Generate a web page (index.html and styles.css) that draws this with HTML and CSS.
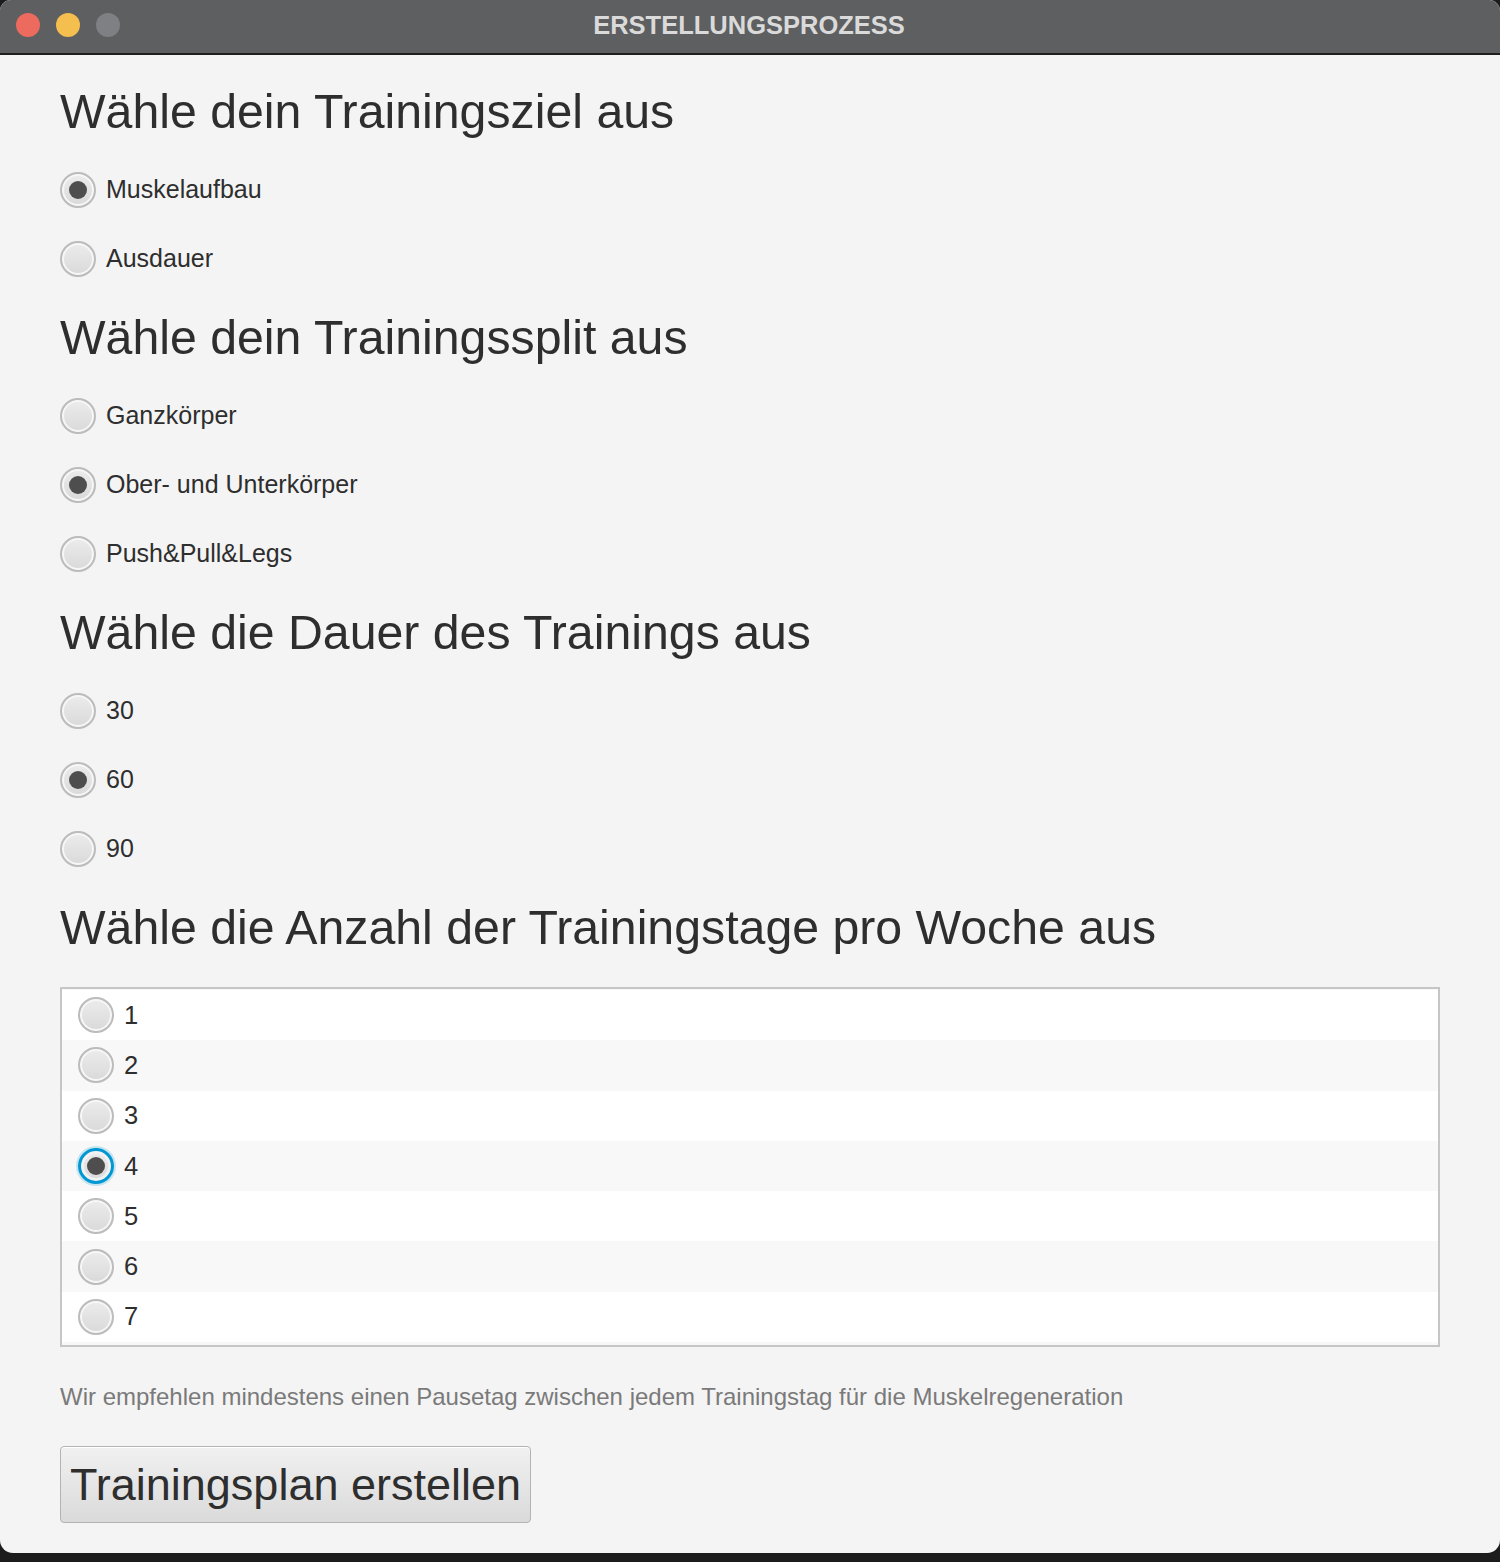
FILE: index.html
```html
<!DOCTYPE html>
<html lang="de">
<head>
<meta charset="utf-8">
<title>Erstellungsprozess</title>
<link rel="stylesheet" href="styles.css">
</head>
<body>
<div class="window">
  <div class="titlebar">
    <div class="lights">
      <span class="light red"></span>
      <span class="light yellow"></span>
      <span class="light gray"></span>
    </div>
    <div class="title">ERSTELLUNGSPROZESS</div>
  </div>
  <div class="content">
    <h2 class="heading">Wähle dein Trainingsziel aus</h2>
    <div class="group">
      <label class="option"><span class="radio checked"></span><span class="label">Muskelaufbau</span></label>
      <label class="option"><span class="radio"></span><span class="label">Ausdauer</span></label>
    </div>
    <h2 class="heading">Wähle dein Trainingssplit aus</h2>
    <div class="group">
      <label class="option"><span class="radio"></span><span class="label">Ganzkörper</span></label>
      <label class="option"><span class="radio checked"></span><span class="label">Ober- und Unterkörper</span></label>
      <label class="option"><span class="radio"></span><span class="label">Push&amp;Pull&amp;Legs</span></label>
    </div>
    <h2 class="heading">Wähle die Dauer des Trainings aus</h2>
    <div class="group">
      <label class="option"><span class="radio"></span><span class="label">30</span></label>
      <label class="option"><span class="radio checked"></span><span class="label">60</span></label>
      <label class="option"><span class="radio"></span><span class="label">90</span></label>
    </div>
    <h2 class="heading">Wähle die Anzahl der Trainingstage pro Woche aus</h2>
    <div class="list">
      <div class="list-row"><span class="radio"></span><span class="label">1</span></div>
      <div class="list-row odd"><span class="radio"></span><span class="label">2</span></div>
      <div class="list-row"><span class="radio"></span><span class="label">3</span></div>
      <div class="list-row odd"><span class="radio checked focused"></span><span class="label">4</span></div>
      <div class="list-row"><span class="radio"></span><span class="label">5</span></div>
      <div class="list-row odd"><span class="radio"></span><span class="label">6</span></div>
      <div class="list-row"><span class="radio"></span><span class="label">7</span></div>
    </div>
    <p class="hint">Wir empfehlen mindestens einen Pausetag zwischen jedem Trainingstag für die Muskelregeneration</p>
    <button class="create">Trainingsplan erstellen</button>
  </div>
</div>
</body>
</html>
```

FILE: styles.css
```css
html, body {
  margin: 0;
  padding: 0;
  background: #1c1c1c;
}

body {
  width: 1500px;
  height: 1562px;
  font-family: "Liberation Sans", Arial, sans-serif;
}

.window {
  width: 1500px;
  height: 1553px;
  background: #f4f4f4;
  border-radius: 11px 11px 13px 13px;
  overflow: hidden;
  display: flex;
  flex-direction: column;
}

.titlebar {
  height: 53px;
  flex: none;
  background: #5e5f61;
  border-bottom: 2px solid #1e1e1e;
  position: relative;
  display: flex;
  align-items: center;
  justify-content: center;
}

.lights {
  position: absolute;
  left: 16px;
  top: 13px;
  display: flex;
  gap: 16px;
}

.light {
  width: 24px;
  height: 24px;
  border-radius: 50%;
  display: block;
}

.light.red { background: #ed6a5e; }
.light.yellow { background: #f5bf4f; }
.light.gray { background: #7f8083; }

.title {
  color: #dadada;
  font-weight: bold;
  font-size: 25.5px;
  margin-left: -2px;
  margin-top: -3px;
}

.content {
  padding: 28px 60px 0 60px;
  display: flex;
  flex-direction: column;
}

.heading {
  margin: 0;
  height: 56px;
  line-height: 56px;
  font-size: 48.25px;
  font-weight: normal;
  color: #2e2e2e;
  white-space: nowrap;
}

.group {
  margin: 16px 0 16px 0;
  display: flex;
  flex-direction: column;
}

.option {
  height: 69px;
  display: flex;
  align-items: center;
  gap: 10px;
}

.label {
  font-size: 25px;
  color: #2e2e2e;
  white-space: nowrap;
}

.radio {
  width: 36px;
  height: 36px;
  box-sizing: border-box;
  border-radius: 50%;
  border: 2px solid #bcbcbc;
  background: linear-gradient(#ececec, #d9d9d9);
  box-shadow: inset 0 0 0 2px #f7f7f7;
  position: relative;
  flex: none;
}

.radio.checked::after {
  content: "";
  position: absolute;
  left: 50%;
  top: 50%;
  width: 18px;
  height: 18px;
  margin: -9px 0 0 -9px;
  border-radius: 50%;
  background: #4e4e4e;
}

.radio.focused {
  border: 3px solid #0097d3;
  box-shadow: 0 0 0 2px rgba(0, 151, 211, 0.2), inset 0 0 0 3px #f2f2f2;
}

.list {
  margin-top: 32px;
  height: 360px;
  box-sizing: border-box;
  border: 2px solid #c6c6c6;
  padding: 1px 0;
  background: #f8f8f8;
  display: flex;
  flex-direction: column;
}

.list-row {
  height: 50.3px;
  flex: none;
  display: flex;
  align-items: center;
  gap: 10px;
  padding-left: 16px;
  background: #ffffff;
}

.list-row.odd {
  background: #f8f8f8;
}

.list-row .label {
  font-size: 25.5px;
}

.hint {
  margin: 35px 0 0 0;
  height: 30px;
  line-height: 30px;
  font-size: 24px;
  color: #7a7a7a;
  white-space: nowrap;
}

.create {
  margin-top: 34px;
  align-self: flex-start;
  width: 471px;
  height: 77px;
  box-sizing: border-box;
  border: 1px solid #b3b3b3;
  border-radius: 4px;
  background: linear-gradient(#f1f1f1, #dadada);
  box-shadow: inset 0 1px 0 #ffffff;
  font-family: "Liberation Sans", Arial, sans-serif;
  font-size: 45px;
  color: #2e2e2e;
  padding: 0;
  text-align: center;
}
```
